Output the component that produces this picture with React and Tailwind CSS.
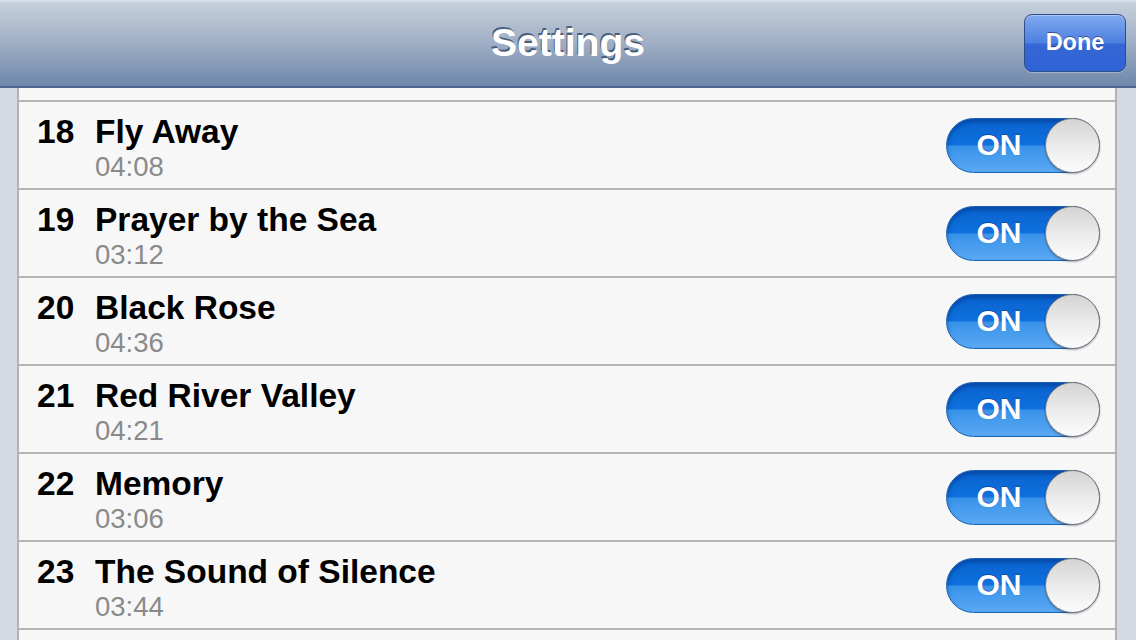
import React from "react";

const rows = [
  ["18", "Fly Away", "04:08"],
  ["19", "Prayer by the Sea", "03:12"],
  ["20", "Black Rose", "04:36"],
  ["21", "Red River Valley", "04:21"],
  ["22", "Memory", "03:06"],
  ["23", "The Sound of Silence", "03:44"],
];

function Toggle() {
  return (
    <div className="relative w-[154px] h-[55px] rounded-full bg-[linear-gradient(to_bottom,#0a62cf_0%,#0d70dc_48%,#3a92ea_52%,#5aa9f3_100%)] border border-[#1762b8] shadow-[inset_0_3px_4px_rgba(0,40,110,0.45)] flex items-center">
      <div className="w-[100px] flex justify-center pl-[4px]">
        <span className="text-white font-bold text-[30px] leading-none [text-shadow:0_-1px_0_rgba(0,40,120,0.5)]">ON</span>
      </div>
      <div className="absolute right-[-1px] top-[-1px] w-[55px] h-[55px] rounded-full border border-[#7d7d7d] bg-[linear-gradient(to_bottom,#d4d4d4,#ededed_55%,#fbfbfb)] shadow-[0_1px_2px_rgba(0,0,0,0.35)]" />
    </div>
  );
}

export default function App() {
  return (
    <div className="w-[1136px] h-[640px] overflow-hidden flex flex-col font-['Liberation_Sans',Arial,sans-serif] bg-[#d5dae2]">
      <div className="h-[88px] shrink-0 relative flex items-center justify-center bg-[linear-gradient(to_bottom,#dbe2ea_0px,#c6d0dc_3px,#a2b1c6_40px,#6e87aa_86px)] border-b-2 border-[#4b6690]">
        <span className="text-white font-bold text-[39px] leading-none mt-[-2px] [text-shadow:-1px_-2px_0_rgba(45,65,100,0.75)]">
          Settings
        </span>
        <div className="absolute right-[10px] top-[14px] w-[102px] h-[58px] rounded-[8px] border border-[#2f4d86] bg-[linear-gradient(to_bottom,#80a9ee,#4c7fe0_50%,#3567d6_52%,#2f62d4)] shadow-[inset_0_1px_0_rgba(255,255,255,0.35),0_1px_0_rgba(255,255,255,0.3)] flex items-center justify-center">
          <span className="text-white font-bold text-[23.5px] leading-none [text-shadow:0_-1px_0_rgba(20,40,100,0.6)]">Done</span>
        </div>
      </div>
      <div className="flex-1 flex">
        <div className="w-[17px] shrink-0 bg-[#d5dae2]" />
        <div className="flex-1 bg-[#f7f7f7] border-x-2 border-[#b0b2b6] flex flex-col">
          <div className="h-[12px] shrink-0" />
          {rows.map(([n, title, time]) => (
            <div key={n} className="h-[88px] shrink-0 border-t-2 border-[#b4b4b4] flex items-center pl-[18px] pr-[15px]">
              <div className="flex-1 flex flex-col self-start pt-[11px]">
                <div className="flex items-baseline">
                  <span className="w-[58px] text-black font-bold text-[33.5px] leading-[37px]">{n}</span>
                  <span className="text-black font-bold text-[33.5px] leading-[37px]">{title}</span>
                </div>
                <div className="pl-[58px] mt-[2px] text-[#8a8a8a] text-[27.5px] leading-[29px]">{time}</div>
              </div>
              <Toggle />
            </div>
          ))}
          <div className="flex-1 border-t-2 border-[#b4b4b4]" />
        </div>
        <div className="w-[19px] shrink-0 bg-[#d5dae2]" />
      </div>
    </div>
  );
}
